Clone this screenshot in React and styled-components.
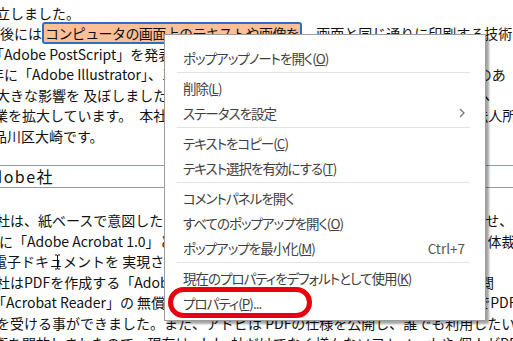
import React from "react";
import styled, { createGlobalStyle } from "styled-components";

const GlobalStyle = createGlobalStyle`
  html, body {
    margin: 0;
    padding: 0;
    background: #fff;
    overflow: hidden;
  }
`;

const Screen = styled.div`
  position: relative;
  width: 513px;
  height: 341px;
  overflow: hidden;
  background: #fff;
`;

const Doc = styled.div`
  margin-top: -18px;
  font-family: "Noto Sans CJK JP", sans-serif;
  font-size: 14px;
  line-height: 20.5px;
  color: #111;
`;

const Line = styled.div`
  height: 20.5px;
  white-space: nowrap;
  text-indent: ${({ $indent = 0 }) => $indent}px;
`;

const Selected = styled.span`
  display: inline-block;
  box-sizing: border-box;
  height: 22px;
  margin: -1px 0;
  padding: 0 1px;
  line-height: 18px;
  vertical-align: top;
  text-indent: 0;
  letter-spacing: -0.6px;
  background: #fcbf98;
  border: 2px solid #2d6fbe;
  border-radius: 3px;
`;

const Heading = styled.h2`
  margin: 19px 0 22px;
  border-top: 1px solid #8a9cb6;
  border-bottom: 1px solid #8a9cb6;
  font-size: 16px;
  font-weight: 400;
  line-height: 21px;
  letter-spacing: 1.5px;
  text-indent: -19px;
  white-space: nowrap;
`;

const Cursor = styled.svg`
  position: absolute;
  left: 54px;
  top: 254px;
`;

const Menu = styled.div`
  position: absolute;
  left: 164px;
  top: 34px;
  width: 322px;
  height: 287px;
  box-sizing: border-box;
  padding: 10px 0 5px;
  background: #fff;
  border: 1px solid #9c9c9c;
  box-shadow: 3px 3px 2px rgba(0, 0, 0, 0.35);
  font-family: "Noto Sans CJK JP", sans-serif;
  font-size: 13.5px;
  letter-spacing: -1px;
  font-feature-settings: "palt";
  color: #404040;
`;

const Item = styled.div`
  display: flex;
  align-items: center;
  justify-content: space-between;
  height: 25px;
  padding: 0 20px 0 18px;
  white-space: nowrap;
`;

const Shortcut = styled.span`
  color: #555;
  letter-spacing: 0;
  font-feature-settings: normal;
`;

const Sep = styled.div`
  height: 1px;
  margin: 2px 15px 2px 12px;
  background: #e3e3e3;
`;

const Mark = styled.div`
  position: absolute;
  left: 168px;
  top: 287px;
  width: 144px;
  height: 31px;
  box-sizing: border-box;
  border: 5px solid #e8000e;
  border-radius: 16px;
`;

const Chevron = () => (
  <svg width="6" height="10" viewBox="0 0 6 10">
    <path d="M1 1l4 4-4 4" fill="none" stroke="#777" strokeWidth="1.3" />
  </svg>
);

const topLines = [
  { text: "アドビ社は1982年にアメリカ合衆国カリフォルニア州マウンテンビューで設", indent: 0 },
  { text: "立しました。", indent: -4 },
  null,
  { text: "「Adobe PostScript」を発表しました。さらに1987年にはグラフィックソフト", indent: -10 },
  { text: "年に「Adobe Illustrator」、1989年に「Adobe Photoshop」を発表し、出版界のあ", indent: -10 },
  { text: "大きな影響を 及ぼしました。 現在はデジタルメディアやマーケティング分野へ", indent: -4 },
  { text: "業を拡大しています。　本社はカリフォルニア州サンノゼ、日本国内での現地法人所", indent: -6 },
  { text: "品川区大崎です。", indent: -7 },
];

const bottomLines = [
  { text: "社は、紙ベースで意図したレイアウトや文字の配置をそのまま電子的に再現させ、", indent: -4 },
  { text: "に「Adobe Acrobat 1.0」と「Acrobat Distiller」を発表し、紙書類と全く同じ体裁", indent: -1 },
  { text: "電子ドキュメントを 実現させました。", indent: -7 },
  { text: "社はPDFを作成する「Adobe Acrobat」と、ウェブで無償配布される、PDFを閲", indent: -4 },
  { text: "「Acrobat Reader」の 無償配布を開始し、誰でもネットを通じて簡単に 無料でPDF", indent: -8 },
  { text: "を受ける事ができました。また、アドビは PDFの仕様を公開し、誰でも利用したい", indent: -4 },
  { text: "術を開放しましたので、現在はadobe社だけでなく様々なソフトメーカや 個人がPDF", indent: -6 },
];

const menuItems = [
  { label: "ポップアップノートを開く", key: "O" },
  "sep",
  { label: "削除", key: "L" },
  { label: "ステータスを設定", sub: true },
  "sep",
  { label: "テキストをコピー", key: "C" },
  { label: "テキスト選択を有効にする", key: "T" },
  "sep",
  { label: "コメントパネルを開く" },
  { label: "すべてのポップアップを開く", key: "O" },
  { label: "ポップアップを最小化", key: "M", shortcut: "Ctrl+7" },
  "sep",
  { label: "現在のプロパティをデフォルトとして使用", key: "K" },
  { label: "プロパティ", key: "P", tail: "..." },
];

export default function App() {
  return (
    <Screen>
      <GlobalStyle />
      <Doc>
        <div>
          {topLines.map((l, i) =>
            l ? (
              <Line key={i} $indent={l.indent}>
                {l.text}
              </Line>
            ) : (
              <Line key={i}>
                後には<Selected>コンピュータの画面上のテキストや画像を</Selected>、画面と同じ通りに印刷する技術
              </Line>
            )
          )}
        </div>
        <Heading>Adobe社</Heading>
        <div>
          {bottomLines.map((l, i) => (
            <Line key={i} $indent={l.indent}>
              {l.text}
            </Line>
          ))}
        </div>
      </Doc>

      <Cursor width="7" height="16" viewBox="0 0 7 16">
        <path d="M1 1h2l0.5 0.5L4 1h2M3.5 1.5v13M1 15h2l0.5-0.5L4 15h2" fill="none" stroke="#000" strokeWidth="1" />
      </Cursor>

      <Menu>
        {menuItems.map((it, i) =>
          it === "sep" ? (
            <Sep key={i} />
          ) : (
            <Item key={i}>
              <span>
                {it.label}
                {it.key && (
                  <>
                    (<u>{it.key}</u>)
                  </>
                )}
                {it.tail}
              </span>
              {it.sub && <Chevron />}
              {it.shortcut && <Shortcut>{it.shortcut}</Shortcut>}
            </Item>
          )
        )}
      </Menu>

      <Mark />
    </Screen>
  );
}
